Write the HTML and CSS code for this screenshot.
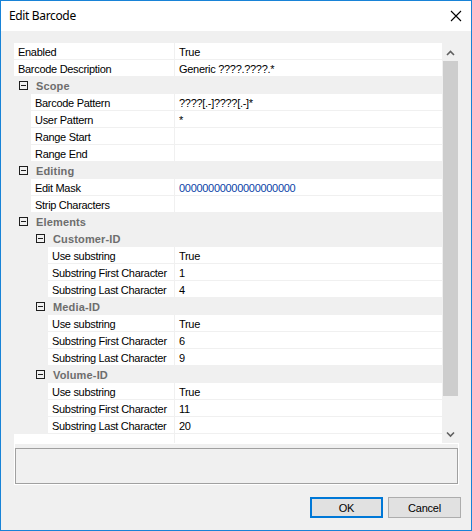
FILE: index.html
```html
<!DOCTYPE html>
<html>
<head>
<meta charset="utf-8">
<title>Edit Barcode</title>
<link rel="stylesheet" href="styles.css">
</head>
<body>
<div class="window">
  <div class="titlebar">
    <span class="title">Edit Barcode</span>
    <svg class="close" width="12" height="12" viewBox="0 0 12 12"><path d="M1 1 L11 11 M11 1 L1 11" stroke="#000" stroke-width="1.1" fill="none"/></svg>
  </div>
  <div class="content">
    <div class="grid">
      <div class="rows">
        <div class="row lv0"><div class="name">Enabled</div><div class="value">True</div></div>
        <div class="row lv0"><div class="name">Barcode Description</div><div class="value">Generic ????.????.*</div></div>
        <div class="cat lv0"><span class="box"></span><span class="cat-label">Scope</span></div>
        <div class="row lv1"><div class="gutter"></div><div class="name">Barcode Pattern</div><div class="value">????[.-]????[.-]*</div></div>
        <div class="row lv1"><div class="gutter"></div><div class="name">User Pattern</div><div class="value">*</div></div>
        <div class="row lv1"><div class="gutter"></div><div class="name">Range Start</div><div class="value"></div></div>
        <div class="row lv1"><div class="gutter"></div><div class="name">Range End</div><div class="value"></div></div>
        <div class="cat lv0"><span class="box"></span><span class="cat-label">Editing</span></div>
        <div class="row lv1"><div class="gutter"></div><div class="name">Edit Mask</div><div class="value mask">00000000000000000000</div></div>
        <div class="row lv1"><div class="gutter"></div><div class="name">Strip Characters</div><div class="value"></div></div>
        <div class="cat lv0"><span class="box"></span><span class="cat-label">Elements</span></div>
        <div class="cat lv1"><span class="box"></span><span class="cat-label">Customer-ID</span></div>
        <div class="row lv2"><div class="gutter"></div><div class="name">Use substring</div><div class="value">True</div></div>
        <div class="row lv2"><div class="gutter"></div><div class="name">Substring First Character</div><div class="value">1</div></div>
        <div class="row lv2"><div class="gutter"></div><div class="name">Substring Last Character</div><div class="value">4</div></div>
        <div class="cat lv1"><span class="box"></span><span class="cat-label">Media-ID</span></div>
        <div class="row lv2"><div class="gutter"></div><div class="name">Use substring</div><div class="value">True</div></div>
        <div class="row lv2"><div class="gutter"></div><div class="name">Substring First Character</div><div class="value">6</div></div>
        <div class="row lv2"><div class="gutter"></div><div class="name">Substring Last Character</div><div class="value">9</div></div>
        <div class="cat lv1"><span class="box"></span><span class="cat-label">Volume-ID</span></div>
        <div class="row lv2"><div class="gutter"></div><div class="name">Use substring</div><div class="value">True</div></div>
        <div class="row lv2"><div class="gutter"></div><div class="name">Substring First Character</div><div class="value">11</div></div>
        <div class="row lv2"><div class="gutter"></div><div class="name">Substring Last Character</div><div class="value">20</div></div>
        <div class="row lv0"><div class="name"></div><div class="value"></div></div>
      </div>
      <div class="scrollbar">
        <div class="sb-btn sb-up"><svg width="17" height="18" viewBox="0 0 17 18"><path d="M5 12 L8.5 8.5 L12 12" stroke="#606060" stroke-width="1.6" fill="none"/></svg></div>
        <div class="sb-track"><div class="sb-thumb"></div></div>
        <div class="sb-btn sb-down"><svg width="17" height="17" viewBox="0 0 17 17"><path d="M5 6.5 L8.5 10 L12 6.5" stroke="#606060" stroke-width="1.6" fill="none"/></svg></div>
      </div>
    </div>
    <div class="desc"><div class="desc-inner"></div></div>
    <div class="buttons">
      <button class="btn btn-default">OK</button>
      <button class="btn">Cancel</button>
    </div>
  </div>
</div>
</body>
</html>
```
FILE: styles.css
```css
html, body {
  margin: 0;
  padding: 0;
  background: #f0f0f0;
}
.window {
  width: 472px;
  height: 531px;
  box-sizing: border-box;
  border: 1px solid #1883d7;
  background: #f0f0f0;
  display: flex;
  flex-direction: column;
  font-family: "Liberation Sans", Arial, sans-serif;
  font-size: 11px;
  color: #000;
}
.titlebar {
  height: 30px;
  background: #fff;
  display: flex;
  align-items: center;
  justify-content: space-between;
  padding: 0 9px 0 8px;
  flex-shrink: 0;
}
.title {
  font-family: "Noto Sans", "Open Sans", sans-serif;
  font-size: 12px;
  letter-spacing: -0.35px;
  color: #000;
  margin-top: -1px;
}
.close {
  display: block;
  margin-top: -1px;
}
.content {
  padding: 12px 12px 0 13px;
  display: flex;
  flex-direction: column;
}
.grid {
  display: flex;
  width: 445px;
  height: 400px;
}
.rows {
  width: 428px;
  height: 400px;
  overflow: hidden;
  background: #f0f0f0;
}
.row {
  display: flex;
  height: 16px;
  margin-bottom: 1px;
  line-height: 18px;
  letter-spacing: -0.3px;
}
.gutter {
  flex-shrink: 0;
  background: #f0f0f0;
}
.lv1 .gutter { width: 17px; }
.lv2 .gutter { width: 34px; }
.name {
  background: #fff;
  padding-left: 4px;
  box-sizing: border-box;
  white-space: nowrap;
  overflow: hidden;
}
.lv0 .name { width: 160px; }
.lv1 .name { width: 143px; }
.lv2 .name { width: 126px; }
.value {
  flex: 1;
  background: #fff;
  margin-left: 1px;
  padding-left: 4px;
  white-space: nowrap;
}
.value.mask {
  color: #0a3fa8;
}
.cat {
  display: flex;
  align-items: center;
  height: 16px;
  margin-bottom: 1px;
  background: #f0f0f0;
}
.cat.lv0 { padding-left: 5px; }
.cat.lv1 { padding-left: 22px; }
.box {
  width: 7px;
  height: 7px;
  border: 1px solid #1e1e1e;
  position: relative;
  margin-top: 1px;
  flex-shrink: 0;
}
.box::after {
  content: "";
  position: absolute;
  left: 1px;
  right: 1px;
  top: 3px;
  height: 1px;
  background: #1e1e1e;
}
.cat-label {
  margin-left: 8px;
  font-weight: bold;
  color: #6d6d6d;
  letter-spacing: 0.15px;
  line-height: 18px;
  height: 16px;
}
.scrollbar {
  width: 17px;
  height: 400px;
  background: #f0f0f0;
  display: flex;
  flex-direction: column;
}
.sb-btn svg { display: block; }
.sb-up { height: 18px; }
.sb-down { height: 17px; }
.sb-track {
  flex: 1;
  padding: 0 1px;
}
.sb-thumb {
  height: 335px;
  background: #cdcdcd;
}
.desc {
  width: 445px;
  height: 42px;
  box-sizing: border-box;
  border: 1px solid #fff;
  padding: 4px 0 0 0;
}
.desc-inner {
  height: 36px;
  box-sizing: border-box;
  border: 1px solid #a0a0a0;
  background: #f0f0f0;
}
.buttons {
  display: flex;
  justify-content: flex-end;
  gap: 5px;
  margin-top: 12px;
  margin-right: -2px;
}
.btn {
  width: 73px;
  height: 21px;
  box-sizing: border-box;
  background: #e1e1e1;
  border: 1px solid #adadad;
  font-family: "Liberation Sans", Arial, sans-serif;
  font-size: 11px;
  letter-spacing: -0.2px;
  color: #000;
  padding: 0;
  margin: 0;
}
.btn-default {
  border: 2px solid #0078d7;
}
```
